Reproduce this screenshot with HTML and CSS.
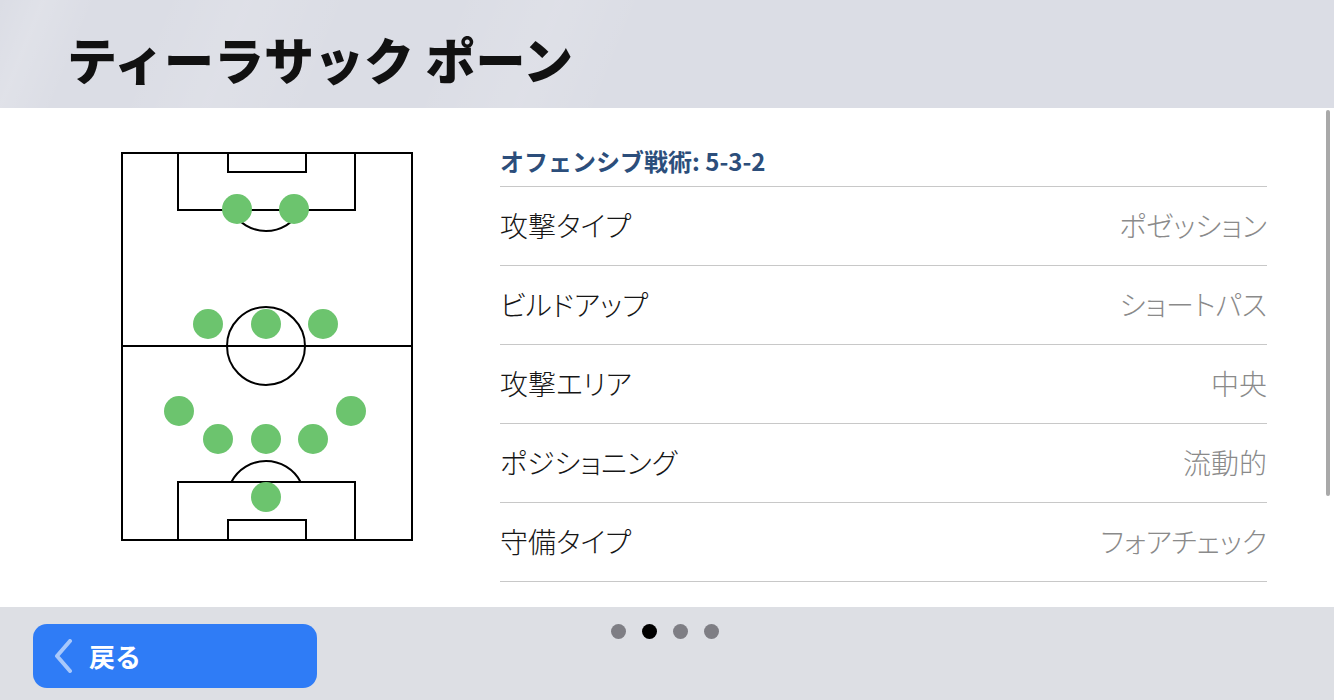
FILE: index.html
```html
<!DOCTYPE html>
<html lang="ja">
<head>
<meta charset="utf-8">
<title>ティーラサック ポーン</title>
<link rel="stylesheet" href="styles.css">
</head>
<body>
<div class="screen">
  <header class="header">
    <h1 class="title">ティーラサック ポーン</h1>
  </header>
  <main class="panel">
    <div class="pitch-wrap">
      <svg class="pitch" width="294" height="392" viewBox="0 0 294 392">
        <g fill="none" stroke="#000" stroke-width="2">
          <rect x="2" y="2" width="290" height="387"/>
          <line x1="2" y1="195" x2="292" y2="195"/>
          <circle cx="146" cy="195" r="39"/>
          <rect x="58" y="2" width="177" height="57"/>
          <rect x="108" y="2" width="78" height="19"/>
          <path d="M111.4 59 A39 39 0 0 0 180.6 59"/>
          <rect x="58" y="331" width="177" height="58"/>
          <rect x="108" y="369" width="78" height="20"/>
          <path d="M111.4 331 A39 39 0 0 1 180.6 331"/>
        </g>
        <g fill="#6cc46e">
          <circle cx="117" cy="58" r="15"/>
          <circle cx="174" cy="58" r="15"/>
          <circle cx="88" cy="173" r="15"/>
          <circle cx="146" cy="173" r="15"/>
          <circle cx="203" cy="173" r="15"/>
          <circle cx="59" cy="260" r="15"/>
          <circle cx="231" cy="260" r="15"/>
          <circle cx="98" cy="288" r="15"/>
          <circle cx="146" cy="288" r="15"/>
          <circle cx="193" cy="288" r="15"/>
          <circle cx="146" cy="346" r="15"/>
        </g>
      </svg>
    </div>
    <section class="info">
      <h2 class="info-title">オフェンシブ戦術: 5-3-2</h2>
      <div class="row"><span class="label">攻撃タイプ</span><span class="value">ポゼッション</span></div>
      <div class="row"><span class="label">ビルドアップ</span><span class="value">ショートパス</span></div>
      <div class="row"><span class="label">攻撃エリア</span><span class="value">中央</span></div>
      <div class="row"><span class="label">ポジショニング</span><span class="value">流動的</span></div>
      <div class="row"><span class="label">守備タイプ</span><span class="value">フォアチェック</span></div>
    </section>
    <div class="scrollbar"></div>
  </main>
  <footer class="footer">
    <button class="back">
      <svg class="chev" width="22" height="34" viewBox="0 0 22 34"><path d="M18 2 L5 17 L18 32" fill="none" stroke="#a8c8fb" stroke-width="4" stroke-linecap="round" stroke-linejoin="round"/></svg>
      <span class="back-text">戻る</span>
    </button>
    <div class="dots">
      <span class="dot"></span>
      <span class="dot active"></span>
      <span class="dot"></span>
      <span class="dot"></span>
    </div>
  </footer>
</div>
</body>
</html>
```

FILE: styles.css
```css
* { box-sizing: border-box; }
html, body {
  margin: 0;
  padding: 0;
}
body {
  width: 1334px;
  height: 700px;
  overflow: hidden;
  font-family: "Noto Sans CJK JP", "Noto Sans", sans-serif;
  background: #dddfe4;
}
.screen {
  width: 1334px;
  height: 700px;
  display: flex;
  flex-direction: column;
}
.header {
  height: 108px;
  flex: none;
  display: flex;
  align-items: center;
  padding-left: 67px;
  background:
    linear-gradient(112deg, rgba(255,255,255,0) 0px, rgba(255,255,255,0.14) 40px, rgba(255,255,255,0) 90px,
      rgba(255,255,255,0) 150px, rgba(255,255,255,0.10) 230px, rgba(255,255,255,0) 330px,
      rgba(255,255,255,0) 420px, rgba(255,255,255,0.10) 520px, rgba(255,255,255,0) 600px),
    #dbdde5;
}
.title {
  margin: 0;
  font-size: 50px;
  font-weight: 900;
  color: #111;
  line-height: 1;
  padding-top: 8px;
}
.panel {
  height: 499px;
  flex: none;
  background: #fff;
  display: flex;
  position: relative;
}
.pitch-wrap {
  padding-left: 120px;
  padding-top: 43px;
  width: 500px;
  flex: none;
}
.pitch { display: block; }
.info {
  width: 767px;
  flex: none;
}
.info-title {
  margin: 0;
  padding-top: 40px;
  padding-bottom: 12px;
  line-height: 26px;
  height: 79px;
  font-size: 24px;
  font-weight: 700;
  color: #2c4e7b;
  border-bottom: 1px solid #c8c8c8;
}
.row {
  height: 79px;
  display: flex;
  align-items: center;
  justify-content: space-between;
  border-bottom: 1px solid #c8c8c8;
  font-size: 28px;
  font-weight: 300;
  font-feature-settings: "palt";
  padding-bottom: 2px;
}
.label { color: #161616; }
.value { color: #8a8a8a; }
.scrollbar {
  position: absolute;
  right: 4px;
  top: 2px;
  width: 4px;
  height: 386px;
  border-radius: 2px;
  background: #a9a9a9;
}
.footer {
  flex: 1;
  position: relative;
  padding-left: 33px;
  padding-top: 17px;
  background: #dddfe4;
}
.back {
  width: 284px;
  height: 64px;
  border: none;
  border-radius: 14px;
  background: #2f7cf6;
  display: flex;
  align-items: center;
  padding: 0 0 0 19px;
  gap: 15px;
  font-family: inherit;
}
.chev { display: block; }
.back-text {
  color: #fff;
  font-size: 26px;
  font-weight: 700;
  line-height: 1;
}
.dots {
  position: absolute;
  left: 611px;
  top: 17px;
  display: flex;
  gap: 16px;
}
.dot {
  width: 15px;
  height: 15px;
  border-radius: 50%;
  background: #7e7e84;
}
.dot.active { background: #000; }
```
